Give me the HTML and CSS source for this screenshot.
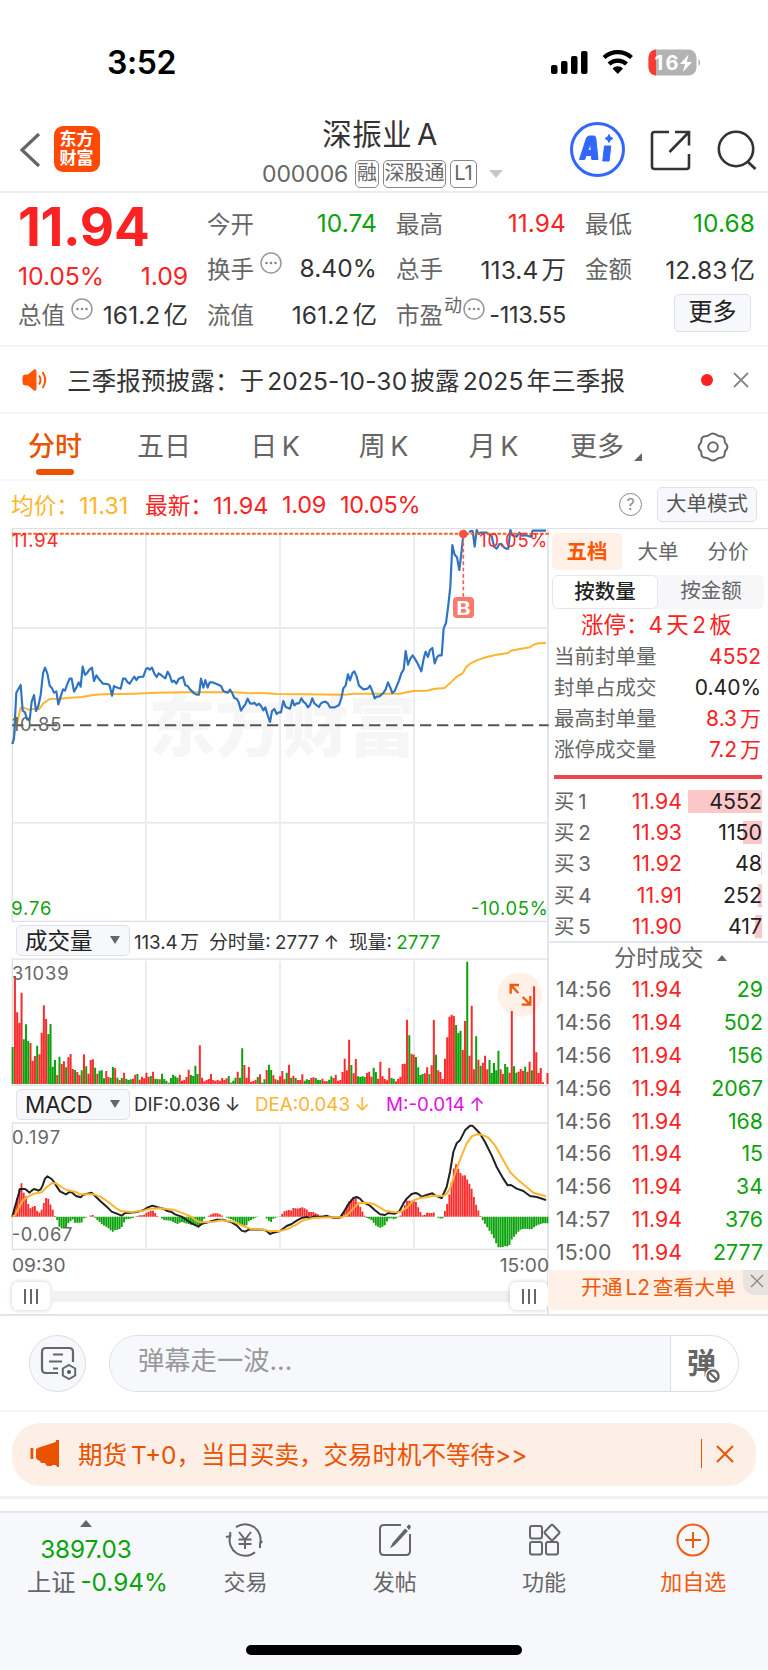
FILE: index.html
```html
<!DOCTYPE html>
<html lang="zh-CN">
<head>
<meta charset="utf-8">
<title>深振业A 000006</title>
<link rel="stylesheet" href="styles.css">
</head>
<body>
<div class="app">
  <div class="status">
    <span class="clock">3:52</span>
    <svg class="status-icons" width="152" height="30" viewBox="0 0 152 30">
      <rect x="1" y="17" width="6.500" height="9" rx="2"/><rect x="11" y="13" width="6.500" height="13" rx="2"/><rect x="21" y="8" width="6.500" height="18" rx="2"/><rect x="31" y="3" width="6.500" height="23" rx="2"/>
      <path d="M54 9.500a20.500 20.500 0 0 1 27.500 0M59 16a13.200 13.200 0 0 1 17.500 0" fill="none" stroke="#000" stroke-width="4.300"/>
      <path d="M62.500 20.500a7.500 7.500 0 0 1 10.500 0l-5.250 5.500z"/>
      <clipPath id="bat"><rect x="98.500" y="1.500" width="48" height="26" rx="8"/></clipPath>
      <g clip-path="url(#bat)"><rect x="98" y="1" width="49" height="27" fill="#b3b3b5"/><rect x="98" y="1" width="8" height="27" fill="#ff3b30"/></g>
      <path d="M148.500 11q3.200 3.500 0 7z" fill="#a9a9ab"/>
      <text x="104.500" y="22.200" class="bat-text" textLength="24">16</text>
      <path d="M138.500 6.500l-8.500 9.500h5l-2 8 9-10h-5.200z" fill="#fff"/>
    </svg>
  </div>

  <header class="header">
    <svg class="back" width="22" height="36" viewBox="0 0 22 36"><path d="M20 2L3 18l17 16" fill="none" stroke="#666" stroke-width="3.200"/></svg>
    <div class="logo"><span>东方</span><span>财富</span></div>
    <div class="title">
      <div class="name">深振业 A</div>
      <div class="code"><span class="num">000006</span><b class="tag t1">融</b><b class="tag t3">深股通</b><b class="tag t2">L1</b><i class="caret"></i></div>
    </div>
    <svg class="hicons" width="190" height="58" viewBox="0 0 190 58">
      <circle cx="29.500" cy="28.500" r="26" fill="none" stroke="#3366ff" stroke-width="3"/>
      <path d="M11.500 38.500L18.500 17q1-2 3-2h4q2 0 2.300 2l2.200 21.500h-6.200l-.4-4h-5.400l-1.300 4zM19.800 29.500h3.300l-.5-7z" fill="#3366ff" stroke="#3366ff" stroke-linejoin="round"/>
      <path d="M36.500 25h6.300l-1.700 15h-6.300z" fill="#3366ff" stroke="#3366ff" stroke-linejoin="round"/>
      <path d="M41 13.500q.8 3.200 4 4-3.200.8-4 4-.8-3.200-4-4 3.200-.8 4-4z" fill="#3366ff" stroke="#3366ff"/>
      <path d="M101 11H86.500q-2.500 0-2.500 2.500v32q0 2.500 2.500 2.500h32q2.500 0 2.500-2.500V33M107 11h14v13.500M121 11L101.500 31" fill="none" stroke="#333" stroke-width="2.600"/>
      <circle cx="168" cy="28" r="17.200" fill="none" stroke="#333" stroke-width="2.600"/><path d="M179.500 40.500l8 7.500" stroke="#333" stroke-width="2.800"/>
    </svg>
  </header>

  <section class="quote">
    <div class="qcol c1">
      <div class="big">11.94</div>
      <div class="pair red"><span>10.05%</span><span>1.09</span></div>
      <div class="pair"><label>总值</label><svg class="info" viewBox="0 0 22 22"><use href="#dots"/></svg><span class="v">161.2 亿</span></div>
    </div>
    <div class="qcol c2">
      <div class="pair"><label>今开</label><span class="v green">10.74</span></div>
      <div class="pair"><label>换手</label><svg class="info" viewBox="0 0 22 22"><g id="dots"><circle cx="11" cy="11" r="10" fill="none" stroke="#999" stroke-width="1.500"/><g fill="#888"><circle cx="6.500" cy="11" r="1.300"/><circle cx="11" cy="11" r="1.300"/><circle cx="15.500" cy="11" r="1.300"/></g></g></svg><span class="v">8.40%</span></div>
      <div class="pair"><label>流值</label><span class="v">161.2 亿</span></div>
    </div>
    <div class="qcol c3">
      <div class="pair"><label>最高</label><span class="v red">11.94</span></div>
      <div class="pair"><label>总手</label><span class="v">113.4 万</span></div>
      <div class="pair pe"><label>市盈</label><sup>动</sup><svg class="info" viewBox="0 0 22 22"><use href="#dots"/></svg><span class="v">-113.55</span></div>
    </div>
    <div class="qcol c4">
      <div class="pair"><label>最低</label><span class="v green">10.68</span></div>
      <div class="pair"><label>金额</label><span class="v">12.83 亿</span></div>
      <div class="pair"><span class="more">更多</span></div>
    </div>
  </section>

  <section class="notice">
    <svg width="26" height="24" viewBox="0 0 26 24"><path d="M1 9q0-2 2-2h3l6-5q2-1 2 1v18q0 2-2 1l-6-5H3q-2 0-2-2z" fill="#ff5500" stroke="#ff5500"/><path d="M17 7.500q3 4.500 0 9M20.500 4q5.500 8 0 16" fill="none" stroke="#ff5500" stroke-width="2"/></svg>
    <span class="ntext">三季报预披露：于 2025-10-30 披露 2025 年三季报</span>
    <i class="dot"></i>
    <svg class="nx" width="16" height="16" viewBox="0 0 16 16"><path d="M1 1l14 14M15 1L1 15" stroke="#888" stroke-width="1.800"/></svg>
  </section>

  <nav class="tabs">
    <span class="tab on">分时</span><span class="tab">五日</span><span class="tab">日 K</span><span class="tab">周 K</span><span class="tab">月 K</span><span class="tab tmore">更多<i></i></span>
    <svg class="gear" width="32" height="30" viewBox="0 0 32 30"><path d="M12.500 2.800q3.500-2.600 7 0 1.800 1.600 4.200 1.500 4 .3 3.900 4.200 0 2.400 1.700 3.600 2.200 2.900 0 5.800-1.700 1.200-1.700 3.600.1 3.900-3.900 4.200-2.400-.1-4.200 1.500-3.500 2.600-7 0-1.800-1.600-4.200-1.500-4-.3-3.900-4.200 0-2.400-1.700-3.600-2.200-2.900 0-5.800 1.700-1.200 1.700-3.600-.1-3.900 3.900-4.200 2.400.1 4.200-1.500z" fill="none" stroke="#666" stroke-width="2"/><circle cx="16" cy="15" r="4.800" fill="none" stroke="#666" stroke-width="2"/></svg>
  </nav>

  <div class="inforow">
    <span class="gold a1"><span>均价：</span>11.31</span><span class="red a2"><span>最新：</span>11.94</span><span class="red a3">1.09</span><span class="red a4">10.05%</span>
    <span class="help">?</span><span class="mode">大单模式</span>
  </div>

  <main class="board">
    <div class="charts">
      <svg class="pane" width="537" height="394" viewBox="36 24 1611 1182">
        <text x="446" y="694" class="wm" textLength="800">东方财富</text>
        <path d="M438 34V1198M840 34V1198M1242 34V1198" class="grid" stroke-width="5"/>
        <path d="M36 324H1646M36 908H1646" class="grid" stroke-width="6"/>
        <path d="M36 26H1646M37 24V1206M36 1204H1646" class="edge"/>
        <path d="M36 615.500H1646" stroke="#555" stroke-width="6" stroke-dasharray="34 17"/>
        <path class="avg" d="M37 672L45 635 62 563 70 563 85 569 100 567 118 567 130 550 149 537 180 536 210 533 245 531 280 525 310 523 400 521 470 518 560 517 700 517 740 519 800 520 830 522 910 523 1035 524 1060 521 1200 521 1220 517 1240 513 1280 512 1305 506 1333 504 1350 490 1370 470 1385 462 1390 457 1398 442 1410 431 1430 421 1460 411 1490 404 1525 399 1532 392 1560 387 1590 382 1600 374 1615 370 1638 369"/>
        <path class="price" d="M37 672L42 655 49 518 62 495 68 572 75 577 81 598 89 600 95 545 102 525 108 573 115 558 122 525 129 460 135 443 142 460 149 497 155 503 162 518 169 514 175 553 182 530 189 508 195 512 202 492 209 476 215 476 222 515 229 503 236 487 242 500 248 440 255 465 262 458 269 448 276 443 282 483 289 466 296 476 309 491 323 492 329 497 336 527 342 498 349 502 362 506 369 476 376 476 382 486 389 491 396 480 403 470 409 480 416 471 430 470 438 447 443 444 449 449 456 443 463 461 470 471 476 460 483 465 496 475 503 455 509 466 516 486 522 482 529 491 536 477 549 471 556 496 563 498 570 508 583 520 590 524 597 524 603 476 610 503 616 480 623 503 629 487 637 487 650 492 663 498 670 513 683 518 690 509 696 518 703 534 710 536 716 547 723 572 730 561 736 553 743 536 750 550 757 551 763 548 770 556 777 551 783 558 790 571 796 562 803 586 810 606 816 573 823 567 830 582 836 577 843 577 850 543 857 561 870 566 877 540 883 556 890 550 897 550 904 535 910 545 917 551 924 562 930 555 937 535 943 550 957 561 963 550 970 546 977 545 984 551 990 562 1004 562 1017 555 1024 535 1030 505 1037 496 1044 463 1050 481 1057 460 1063 454 1070 470 1077 497 1090 508 1103 506 1110 497 1117 514 1124 535 1130 530 1138 529 1150 519 1157 508 1164 487 1171 503 1177 519 1184 513 1197 482 1204 460 1211 449 1217 393 1224 434 1231 416 1238 406 1244 415 1251 427 1264 454 1271 416 1277 395 1284 411 1290 390 1297 384 1304 430 1311 412 1317 406 1325 406 1331 325 1338 309 1345 255 1351 200 1357 75 1364 104 1371 112 1378 150 1384 100 1390 42M1408 38L1412 33 1418 33 1424 80 1430 30 1436 42 1442 38 1460 38 1475 48 1482 80 1490 86 1498 72 1505 72 1512 82 1518 86 1525 86 1531 30 1537 46 1550 50 1558 38 1565 47 1578 46 1592 50 1598 32 1638 32"/>
        <path d="M36 41.500H1646" stroke="#f26419" stroke-width="6" stroke-dasharray="11 5"/>
        <path d="M1390 48V232" stroke="#fa5a50" stroke-width="5" stroke-dasharray="11 8"/>
        <circle cx="1390" cy="42" r="13" fill="#f55042"/>
        <rect x="1359" y="231" width="63" height="63" rx="12" fill="#fc786b"/>
        <text x="1369" y="284" class="bmark" textLength="43" lengthAdjust="spacingAndGlyphs">B</text>
        <text x="35" y="81" class="lab" fill="#fa2a2a" textLength="140">11.94</text>
        <text x="1438" y="81" class="lab" fill="#fa2a2a" textLength="204">10.05%</text>
        <text x="35" y="633" class="lab" fill="#666" textLength="149">10.85</text>
        <text x="34" y="1184" class="lab" fill="#0fa30f" textLength="120">9.76</text>
        <text x="1413" y="1184" class="lab" fill="#0fa30f" textLength="230">-10.05%</text>
      </svg>
      <div class="chead"><span class="sel vol"><span>成交量</span><i></i></span><span class="cinfo v1">113.4 万</span><span class="cinfo v2">分时量: 2777 ↑</span><span class="cinfo v3">现量: <em>2777</em></span></div>
      <svg class="pane" width="537" height="128" viewBox="36 129 1611 384">
        <path d="M438 139V509M840 139V509M1242 139V509" class="grid" stroke-width="5"/>
        <path d="M36 132.500H1646M37 130V512M36 511H1646" class="edge"/>
        <circle cx="1560" cy="239" r="66" fill="#fff0e8"/>
        <path id="volUp" fill="#f92b2b"/><path id="volDown" fill="#0ba30b"/>
        <path d="M1532 236V210H1557M1532 210L1555 234M1591 243V269H1565M1591 269L1568 246" fill="none" stroke="#f25a0a" stroke-width="7"/>
        <text x="36" y="195" class="lab" fill="#666" textLength="170">31039</text>
      </svg>
      <div class="chead"><span class="sel"><span>MACD</span><i></i></span><span class="cinfo m1">DIF:0.036 ↓</span><span class="cinfo m2">DEA:0.043 ↓</span><span class="cinfo m3">M:-0.014 ↑</span></div>
      <svg class="pane" width="537" height="128" viewBox="36 620 1611 384">
        <path d="M438 630V997M840 630V997M1242 630V997" class="grid" stroke-width="5"/>
        <path d="M36 623H1646M37 622V1000M36 1002H1646" class="edge"/>
        <path id="macdUp" fill="#f92b2b"/><path id="macdDown" fill="#0ba30b"/>
        <path class="dif" d="M37 904L42 885 52 850 60 821 75 821 82 826 89 832 95 826 102 821 109 823 115 826 122 822 128 810 135 790 142 783 155 791 162 800 168 810 180 828 198 837 208 830 215 831 228 842 242 846 250 838 275 832 300 856 320 874 335 889 350 895 365 901 375 893 390 892 410 890 430 885 440 878 457 871 470 875 490 880 500 886 515 890 525 897 545 904 560 914 575 924 595 934 605 926 618 922 650 913 668 913 695 921 710 930 725 946 735 949 748 942 790 943 800 947 810 956 820 952 840 947 860 932 875 926 890 916 907 907 920 905 930 908 943 903 960 905 980 902 1000 907 1020 907 1030 892 1045 867 1060 848 1070 845 1080 850 1090 861 1110 871 1125 885 1140 897 1155 899 1165 893 1185 895 1198 888 1210 865 1220 850 1235 836 1247 833 1255 836 1265 844 1282 838 1297 834 1305 840 1325 848 1340 815 1350 770 1360 710 1370 684 1380 675 1395 645 1410 631 1417 631 1430 644 1440 655 1455 680 1475 720 1490 755 1510 790 1523 810 1533 809 1550 820 1570 827 1590 842 1610 845 1638 854"/>
        <path class="avg" d="M37 904L45 900 55 880 65 860 75 850 85 844 102 835 125 831 140 815 155 804 168 804 185 815 200 824 225 829 240 837 280 837 300 843 325 860 350 880 365 888 395 890 430 886 450 880 480 879 520 883 550 894 575 905 590 917 605 921 640 919 665 915 700 919 730 932 750 940 790 943 810 947 840 947 860 942 885 930 910 915 940 908 990 906 1025 906 1040 900 1060 880 1075 864 1095 862 1120 865 1155 886 1180 890 1198 891 1220 878 1240 855 1260 848 1280 846 1300 841 1330 842 1340 835 1350 820 1365 775 1385 720 1400 685 1415 663 1430 657 1445 658 1465 667 1485 690 1510 735 1530 770 1555 795 1580 815 1600 832 1638 843"/>
        <text x="36" y="686" class="lab" fill="#666" textLength="144">0.197</text>
        <text x="35" y="978" class="lab" fill="#666" textLength="182">-0.067</text>
      </svg>
      <div class="times"><span>09:30</span><span>15:00</span></div>
      <div class="slider"><span class="thumb"><i></i><i></i><i></i></span><span class="track"></span><span class="thumb"><i></i><i></i><i></i></span></div>
    </div>

    <aside class="side">
      <div class="stabs"><span class="on">五档</span><span>大单</span><span>分价</span></div>
      <div class="seg"><span class="on">按数量</span><span>按金额</span></div>
      <div class="limit">涨停：4 天 2 板</div>
      <div class="srow"><span>当前封单量</span><span class="red">4552</span></div>
      <div class="srow"><span>封单占成交</span><span class="dark">0.40%</span></div>
      <div class="srow"><span>最高封单量</span><span class="red">8.3 万</span></div>
      <div class="srow"><span>涨停成交量</span><span class="red">7.2 万</span></div>
      <div class="redbar"></div>
      <div class="bids">
        <div class="bid"><span>买 1</span><span class="red">11.94</span><span class="q b1">4552</span></div>
        <div class="bid"><span>买 2</span><span class="red">11.93</span><span class="q b2">1150</span></div>
        <div class="bid"><span>买 3</span><span class="red">11.92</span><span class="q b3">48</span></div>
        <div class="bid"><span>买 4</span><span class="red">11.91</span><span class="q b4">252</span></div>
        <div class="bid"><span>买 5</span><span class="red">11.90</span><span class="q b5">417</span></div>
      </div>
      <div class="dealhead">分时成交<i></i></div>
      <div class="deals">
        <div><span>14:56</span><span>11.94</span><span>29</span></div>
        <div><span>14:56</span><span>11.94</span><span>502</span></div>
        <div><span>14:56</span><span>11.94</span><span>156</span></div>
        <div><span>14:56</span><span>11.94</span><span>2067</span></div>
        <div><span>14:56</span><span>11.94</span><span>168</span></div>
        <div><span>14:56</span><span>11.94</span><span>15</span></div>
        <div><span>14:56</span><span>11.94</span><span>34</span></div>
        <div><span>14:57</span><span>11.94</span><span>376</span></div>
        <div><span>15:00</span><span>11.94</span><span>2777</span></div>
      </div>
      <div class="l2"><span>开通 L2 查看大单</span><b><svg width="14" height="14" viewBox="0 0 14 14"><path d="M1 1l12 12M13 1L1 13" stroke="#888" stroke-width="1.400"/></svg></b></div>
    </aside>
  </main>

  <section class="comment">
    <span class="round"><svg width="38" height="34" viewBox="0 0 38 34"><path d="M18 27H6q-4 0-4-4V6q0-4 4-4h23q4 0 4 4v10M13 8.500h10M9 15.500h13M13 22.500h5" fill="none" stroke="#666" stroke-width="2.200"/><path d="M29 19l6.200 3.500v7L29 33l-6.200-3.500v-7z" fill="none" stroke="#666" stroke-width="2"/><circle cx="29" cy="26" r="2" fill="#555"/></svg></span>
    <div class="inp"><span class="ph">弹幕走一波...</span><span class="dan">弹<svg width="16" height="16" viewBox="0 0 16 16"><circle cx="8" cy="8" r="5.500" fill="#fff" stroke="#fff" stroke-width="5"/><circle cx="8" cy="8" r="5.500" fill="none" stroke="#666" stroke-width="2.500"/><path d="M4.500 4.500l7 7" stroke="#666" stroke-width="2.200"/></svg></span></div>
  </section>

  <section class="adwrap">
    <div class="ad">
      <svg width="30" height="27" viewBox="0 0 30 27"><path d="M29 0v27h-2l-1-2h-4v1h-5l-2-3h-4l-1-2q-3-1-4-3V9l3-1.500L26 2V0zM.5 8h2.800v11H.5z" fill="#eb5200"/></svg>
      <span class="adtext">期货 T+0，当日买卖，交易时机不等待&gt;&gt;</span>
      <i class="bar"></i>
      <svg width="18" height="18" viewBox="0 0 18 18"><path d="M1 1l16 16M17 1L1 17" stroke="#eb5200" stroke-width="2"/></svg>
    </div>
  </section>

  <footer class="bottom">
    <div class="index"><i></i><span class="green">3897.03</span><span>上证 <em class="green">-0.94%</em></span></div>
    <div class="item"><svg width="40" height="36" viewBox="0 0 40 36"><path d="M11 5.200A15.500 15.500 0 0 1 35 22l2.200-3M30 30.200A15.500 15.500 0 0 1 5.200 14L1 15M5.200 10v5M35 26v-4" fill="none" stroke="#666" stroke-width="2"/><path d="M14 10l6 7.500L26 10M20 17v10M13.500 17.500h13M13.500 22h13" fill="none" stroke="#666" stroke-width="2"/></svg><span>交易</span></div>
    <div class="item"><svg width="36" height="36" viewBox="0 0 36 36"><path d="M24 3H7Q3 3 3 7v22q0 4 4 4h22q4 0 4-4V12" fill="none" stroke="#666" stroke-width="2"/><path d="M28 6.500l3 2.500-13 14-5 3.500 2.500-5.500zM29.500 5l2-2.500q3 .5 2 3.500l-1.500 2z" fill="#666"/></svg><span>发帖</span></div>
    <div class="item"><svg width="36" height="36" viewBox="0 0 36 36"><g fill="none" stroke="#666" stroke-width="2"><rect x="4" y="4" width="12" height="12.500" rx="2"/><rect x="4" y="20" width="12" height="12.500" rx="2"/><rect x="20" y="20" width="12" height="12.500" rx="2"/><path d="M25 3.200q1-1 2 0l6 6.300q1 1 0 2L27 17.800q-1 1-2 0l-6-6.300q-1-1 0-2z"/></g></svg><span>功能</span></div>
    <div class="item hot"><svg width="36" height="36" viewBox="0 0 36 36"><circle cx="18" cy="18" r="15.500" fill="none" stroke="#f25a0a" stroke-width="2"/><path d="M18 10v16M10 18h16" stroke="#f25a0a" stroke-width="2"/></svg><span>加自选</span></div>
    <b class="home"></b>
  </footer>
</div>
<script src="chart.js"></script>
</body>
</html>
```
FILE: styles.css
```css
* { box-sizing: border-box; }
body { margin: 0; background: #fff; font-family: Inter, "Noto Sans CJK SC", sans-serif; color: #333; }
.app { width: 768px; height: 1670px; overflow: hidden; display: flex; flex-direction: column; white-space: nowrap; }
.app > * { flex: none; }
i, em { font-style: normal; }
svg { display: block; flex: none; }
.red { color: #fa2222; }
.green { color: #0ba30b; }
.gold { color: #fdb52e; }
.dark { color: #222; }

.status { height: 100px; padding: 42px 66px 0 107px; display: flex; justify-content: space-between; }
.clock { font-weight: 600; font-size: 32px; line-height: 42px; color: #000; letter-spacing: -.4px; }
.status-icons { margin-top: 6px; }
.bat-text { font-size: 20px; font-weight: 700; fill: #fff; }

.header { height: 93px; display: flex; border-bottom: 2px solid #ececee; padding-left: 19px; }
.back { margin-top: 32px; }
.logo { width: 46px; height: 46px; margin: 26px 0 0 12.500px; border-radius: 9px; background: #ff4a05; color: #fff; display: flex; flex-direction: column; align-items: center; justify-content: center; font-weight: 700; font-size: 17px; line-height: 19px; }
.title { width: 301px; margin-left: 121px; display: flex; flex-direction: column; align-items: center; }
.name { font-size: 29.500px; line-height: 36px; margin-top: 16px; margin-left: 18px; color: #333; word-spacing: -4px; letter-spacing: .5px; }
.code { display: flex; align-items: center; height: 28px; margin-top: 8px; font-size: 23px; color: #666; padding-left: 23px; }
.num { width: 93px; letter-spacing: -.1px; }
.tag { font-weight: 400; font-size: 20px; height: 28px; line-height: 25px; border: 1.500px solid #888; border-radius: 5px; text-align: center; margin-right: 4px; }
.t1 { width: 24px; } .t3 { width: 63px; } .t2 { width: 27px; }
.caret { border: 7px solid transparent; border-top: 8px solid #c8c8c8; border-bottom: 0; margin-left: 8px; }
.hicons { margin: 21px 0 0 46.500px; }

.quote { height: 154px; border-bottom: 2px solid #f5f5f6; display: flex; padding: 7px 0 0 18px; font-size: 23.500px; }
.qcol { display: flex; flex-direction: column; margin-right: 19px; flex: none; width: 170px; }
.pair { height: 45.500px; display: flex; align-items: center; }
.pair label { color: #666; }
.pair .v { margin-left: auto; font-size: 24.500px; letter-spacing: .1px; word-spacing: -4px; }
.info { width: 22px; height: 22px; margin: -10px 0 0 6px; }
.big { height: 54px; font-size: 53px; line-height: 54px; font-weight: 700; color: #fa2222; letter-spacing: -.3px; }
.c1 .pair.red { height: 37px; justify-content: space-between; padding-top: 7px; font-size: 24.800px; letter-spacing: -.1px; }
.pair sup { font-size: 18px; margin: -16px 0 0 1px; line-height: 18px; color: #666; }
.pe .info { margin-left: 1px; }
.pair.pe .v { font-size: 23.500px; letter-spacing: -.3px; padding-top: 2px; }
.more { width: 77px; height: 38px; margin: -1px 4px 0 auto; border: 1.500px solid #dfe1e8; border-radius: 5px; background: #f7f8fb; font-size: 24px; line-height: 34px; text-align: center; color: #222; }

.notice { height: 67px; border-bottom: 2px solid #f5f5f6; display: flex; align-items: center; padding-left: 22px; }
.ntext { width: 632px; padding-left: 19px; font-size: 24.500px; word-spacing: -4px; letter-spacing: .15px; }
.dot { width: 12px; height: 12px; border-radius: 50%; background: #fa2222; margin-left: 21px; }
.nx { margin-left: 20px; }

.tabs { height: 67px; border-bottom: 2px solid #f5f5f6; display: flex; align-items: center; font-size: 27px; color: #666; padding-left: 0; }
.tab { width: 110px; text-align: center; height: 67px; line-height: 68px; word-spacing: -3px; position: relative; }
.tab.on { color: #eb5200; font-weight: 500; }
.tab.on::after { content: ""; position: absolute; left: 36px; top: 56px; width: 38px; height: 6px; border-radius: 3px; background: #eb5200; }
.tab:nth-child(2) { width: 108px; } .tab:nth-child(3) { width: 114px; } .tab:nth-child(4) { width: 103px; } .tab:nth-child(5) { width: 117px; }
.tmore { display: flex; width: 99px; padding-left: 18px; }
.tmore i { border-left: 8px solid transparent; border-bottom: 8px solid #666; height: 0; margin: 40px 0 0 10px; }
.gear { margin-left: 46px; }

.inforow { height: 47px; display: flex; align-items: center; font-size: 23.500px; padding: 0 0 1px 11px; }
.a1 span, .a2 span { font-size: 22.700px; }
.a1 { width: 134px; } .a2 { width: 137px; } .a3 { width: 58px; } .a4 { width: 279px; letter-spacing: -.3px; }
.a3 { letter-spacing: -.3px; }
.help { width: 23px; height: 23px; border: 1.500px solid #888; border-radius: 50%; font-size: 16px; line-height: 20px; text-align: center; color: #888; }
.mode { width: 100px; height: 35px; margin: 1px 0 0 15px; border: 1.500px solid #dfe1e8; border-radius: 5px; background: #f7f8fb; text-align: center; font-size: 20.500px; line-height: 32px; color: #555; }

.board { height: 788px; display: grid; grid-template-columns: 549px 219px; border-bottom: 2px solid #e4e5e9; }
.charts { padding-left: 12px; border-right: 2px solid #e4e5ee; display: flex; flex-direction: column; }
.pane { overflow: visible; }
.grid { stroke: #e8eaf1; fill: none; }
.edge { stroke: #dfe0e6; stroke-width: 4; fill: none; }
.price { fill: none; stroke: #2f74c4; stroke-width: 6.500; stroke-linejoin: round; }
.avg { fill: none; stroke: #fdb52e; stroke-width: 6; stroke-linejoin: round; }
.dif { fill: none; stroke: #222; stroke-width: 6; stroke-linejoin: round; }
.lab { font-size: 55px; }
.wm { font-size: 200px; font-weight: 900; fill: #f6f6f7; }
.bmark { font-size: 58px; font-weight: 700; fill: #fff; }
.chead { height: 36px; display: flex; align-items: center; font-size: 18.800px; }
.sel { width: 114px; height: 31px; margin: 0 0 0 4px; border: 1.500px solid #dfe1e8; border-radius: 5px; background: #f7f8fb; display: flex; align-items: center; justify-content: space-between; font-size: 22.500px; padding: 0 9px 0 8px; color: #222; }
.vol span { margin-top: -3px; }
.sel i { border: 5px solid transparent; border-top: 8px solid #666; border-bottom: 0; }
.cinfo { margin-left: 4px; word-spacing: -1px; }
.v1 { width: 71px; word-spacing: -2.500px; letter-spacing: -.1px; } .v2 { width: 136px; } .cinfo em { color: #0ba30b; }
.m1 { width: 117px; } .m2 { width: 127px; color: #fdb52e; } .m3 { color: #e010e8; }
.times { height: 32px; display: flex; justify-content: space-between; line-height: 31px; font-size: 19.200px; color: #666; margin-right: -2px; }
.slider { height: 28px; display: flex; align-items: center; margin-right: -1px; }
.thumb { width: 38px; height: 28px; background: #fff; border-radius: 6px; box-shadow: 0 0 5px rgba(0,0,0,.2); display: flex; justify-content: center; align-items: center; gap: 4px; }
.thumb i { width: 2px; height: 15px; background: #666; }
.track { flex: 1; height: 11px; background: #f1f1f3; }

.side { display: flex; flex-direction: column; font-size: 20.500px; color: #666; border-top: 1px solid #dfe0e6; }
.stabs { display: flex; height: 37px; margin: 4px 0 5px 3px; }
.stabs span { width: 70px; text-align: center; line-height: 37px; border-radius: 5px; }
.stabs .on { background: #fff0e8; color: #ff5500; font-weight: 700; }
.stabs span:nth-child(2) { width: 72px; } .stabs span:nth-child(3) { width: 68px; }
.seg { display: flex; height: 34px; margin: 0 4px 0 3px; background: #f7f7fa; border-radius: 6px; }
.seg span { width: 106px; text-align: center; line-height: 31px; }
.seg .on { background: #fff; border: 1.500px solid #e6e7ec; border-radius: 6px; color: #222; font-weight: 500; }
.limit { height: 32px; line-height: 32px; font-size: 22.500px; color: #fa2222; padding-left: 32px; word-spacing: -3px; }
.srow { height: 31px; line-height: 31px; display: flex; justify-content: space-between; padding: 0 7px 0 5px; word-spacing: -3px; }
.srow .red, .srow .dark { font-size: 21px; }
.redbar { height: 4px; background: #ee4748; margin: 10px 6px 7px 5px; }
.bids { height: 157px; border-bottom: 2px solid #e4e5ee; padding: 0 6px 0 5px; }
.bid { height: 31.200px; line-height: 31px; display: grid; grid-template-columns: 67px 61px 1fr; align-items: center; font-size: 21.300px; word-spacing: -4px; }
.bid span:first-child { font-size: 20.500px; word-spacing: -2px; }
.bid .red { text-align: right; }
.q { height: 23px; line-height: 23px; text-align: right; color: #222; background: linear-gradient(#fdc6c8, #fdc6c8) right / 74px 100% no-repeat; }
.b2 { background-size: 19px 100%; } .b3 { background-size: 1px 100%; } .b4 { background-size: 4px 100%; } .b5 { background-size: 7px 100%; }
.dealhead { height: 30px; line-height: 28px; font-size: 22.300px; padding-left: 65px; display: flex; align-items: center; }
.dealhead i { border: 5px solid transparent; border-bottom: 6px solid #666; border-top: 0; margin-left: 14px; }
.deals { height: 297px; padding: 0 5px 0 7px; font-size: 21.300px; }
.deals div { height: 32.900px; line-height: 32px; display: grid; grid-template-columns: 65px 61px 1fr; }
.deals span:nth-child(1) { letter-spacing: .2px; }
.deals span:nth-child(2) { color: #fa2222; text-align: right; }
.deals span:nth-child(3) { color: #0ba30b; text-align: right; }
.l2 { height: 40px; margin-left: -1px; background: #fff0e8; color: #f25a0a; display: flex; justify-content: space-between; padding-left: 33px; line-height: 36px; word-spacing: -3px; font-size: 20.800px; }
.l2 b { width: 25px; height: 25px; background: #e9e2df; border-bottom-left-radius: 12px; padding: 4px 0 0 7px; }

.comment { height: 96px; border-bottom: 2px solid #f4f4f6; display: flex; align-items: center; padding-left: 29px; }
.round { width: 57px; height: 57px; border-radius: 50%; background: #f7f8fb; border: 1px solid #dcdee5; display: flex; align-items: center; justify-content: center; padding-left: 2px; }
.inp { width: 630px; height: 57px; margin-left: 23px; border-radius: 29px; border: 1.500px solid #dcdee5; overflow: hidden; background: #fff; display: flex; }
.ph { width: 561px; background: #f7f8fb; border-right: 1.500px solid #dcdee5; padding-left: 28px; line-height: 50px; font-size: 26.300px; color: #999; }
.dan { flex: 1; font-size: 29px; font-weight: 700; color: #666; line-height: 56px; padding-left: 16px; position: relative; }
.dan svg { position: absolute; left: 34px; top: 32px; }

.adwrap { height: 87px; padding: 11px 12px 0; border-bottom: 3px solid #f1f1f3; }
.ad { height: 63px; border-radius: 29px; background: #fdeee6; color: #eb5200; display: flex; align-items: center; padding: 0 22px 2px 18px; }
.adtext { font-size: 24.500px; margin-left: 18px; letter-spacing: 0; word-spacing: -3px; }
.bar { width: 1.500px; height: 29px; background: #eb5200; margin: 0 14px 0 auto; }

.bottom { height: 160px; margin-top: 12px; border-top: 2px solid #e6e7ea; background: #f7f8fb; position: relative; display: flex; color: #666; }
.index { width: 171px; display: flex; flex-direction: column; align-items: center; font-size: 24.300px; padding-left: 24px; }
.index i { border: 6.500px solid transparent; border-bottom: 7px solid #666; border-top: 0; margin: 7px 23px 0 0; }
.index span:nth-child(2) { line-height: 32px; margin: 6px 23px 1px 0; letter-spacing: -.1px; }
.index span:nth-child(3) { line-height: 33px; letter-spacing: 0; word-spacing: -2px; }
.item { width: 149.500px; display: flex; flex-direction: column; align-items: center; font-size: 22px; line-height: 33px; }
.item svg { margin: 9px 0 8px; }
.hot { color: #f25a0a; }
.home { position: absolute; left: 246px; top: 131.500px; width: 276px; height: 10px; border-radius: 5px; background: #000; }
```
FILE: chart.js
```js
// Bar slots are one trading minute wide, in viewBox units.
const PITCH = 6.685;
const LEFT = 35;

// Minute volume: positive for a rising minute, negative for a falling one.
const volume = [
  -111,324,215,184,274,-134,-179,-129,123,70,84,-115,89,154,236,195,-150,-180,-52,-72,
  27,-82,60,68,-50,80,90,45,-42,36,27,-41,89,-53,31,72,74,-49,31,-40,
  -41,-17,39,21,-19,-51,47,-19,12,-18,34,-16,-12,-14,16,28,-30,13,22,17,
  34,22,-24,37,-16,-15,14,-31,-15,-10,4,-18,-28,-23,-19,28,10,13,21,43,
  -27,-24,-55,-30,116,19,8,12,15,30,12,10,12,10,18,13,17,-24,4,-10,
  -19,37,-19,-107,57,19,51,7,9,13,-21,29,-4,-14,42,-58,-42,26,14,-11,
  23,39,14,-34,58,-19,25,-18,12,12,29,-10,-14,-12,18,20,-18,-13,-12,16,
  9,8,-13,-23,18,28,10,12,36,76,41,133,-57,32,75,-23,-21,-23,-21,33,
  37,22,-49,-36,16,67,23,15,11,48,-18,-16,8,16,21,60,61,193,-146,91,
  88,-81,-50,-27,-30,32,50,-30,56,192,-88,41,36,15,76,140,202,208,204,-177,
  -154,-160,102,189,-367,85,235,44,-143,73,-55,64,85,44,-72,-33,-63,-41,-100,44,
  30,-60,-51,34,219,-53,-34,37,45,40,-52,37,67,-41,293,95,33,48,5,0,33
];

// MACD histogram as x, height pairs; minutes in between are interpolated.
const macd = [
  37,0,50,50,57,80,64,104,71,72,77,65,84,40,91,25,104,34,111,18,118,12,124,18,131,40,138,56,144,56,151,38,158,22,164,4,
  171,-8,178,-30,184,-36,198,-32,205,-20,218,-8,225,-18,245,-18,251,-5,265,0,278,6,285,-3,305,-22,325,-34,338,-46,345,-40,
  358,-38,365,-32,372,-18,379,-8,399,-4,405,0,419,4,432,5,439,12,452,18,459,18,465,12,472,2,479,0,492,-10,512,-12,532,-22,
  545,-16,572,-24,599,-26,606,-18,613,-6,620,0,640,10,653,10,666,4,673,0,693,-8,706,-14,733,-30,740,-26,746,-14,760,-6,
  773,-1,793,0,799,-4,812,-18,820,-6,830,-2,840,0,853,16,866,20,873,18,880,26,893,24,907,28,
  920,22,926,14,940,14,960,4,967,2,980,6,987,1,1020,1,1027,10,1033,18,1047,46,1060,58,1067,56,1080,32,1093,4,1100,-4,
  1113,-8,1127,-26,1140,-34,1153,-28,1160,-16,1167,-6,1173,-4,1180,-8,1187,-6,1200,1,1207,16,1220,48,1234,48,1247,46,
  1254,30,1260,16,1267,4,1273,4,1280,12,1294,10,1300,16,1307,0,1327,-8,1330,0,1334,14,1340,32,1347,60,1353,90,1360,140,
  1367,160,1380,134,1387,122,1393,128,1414,88,1427,40,1440,6,1447,-8,1467,-40,1480,-60,1494,-92,1507,-92,1514,-88,1527,-90,
  1534,-70,1560,-40,1573,-36,1594,-38,1607,-28,1627,-20,1650,-20
];

function heightAt(x) {
  for (let k = 0; k + 3 < macd.length; k += 2) {
    const [x0, h0, x1, h1] = macd.slice(k, k + 4);
    if (x >= x0 && x <= x1) return h0 + (h1 - h0) * (x - x0) / (x1 - x0);
  }
  return 0;
}

function bar(i, y, h, w) {
  return `M${(LEFT + i * PITCH).toFixed(1)} ${y}h${w}v${h.toFixed(1)}h-${w}z`;
}

let volUp = "", volDown = "", up = "", down = "";
volume.forEach((v, i) => {
  if (v > 0) volUp += bar(i, 507, -v, 6);
  else if (v < 0) volDown += bar(i, 507, v, 6);
  const h = heightAt(LEFT + 3 + i * PITCH);
  if (h > 0) up += bar(i, 904, -h, 5.6);
  else if (h < 0) down += bar(i, 904, -h, 5.6);
});
document.getElementById("volUp").setAttribute("d", volUp);
document.getElementById("volDown").setAttribute("d", volDown);
document.getElementById("macdUp").setAttribute("d", up);
document.getElementById("macdDown").setAttribute("d", down);
```
